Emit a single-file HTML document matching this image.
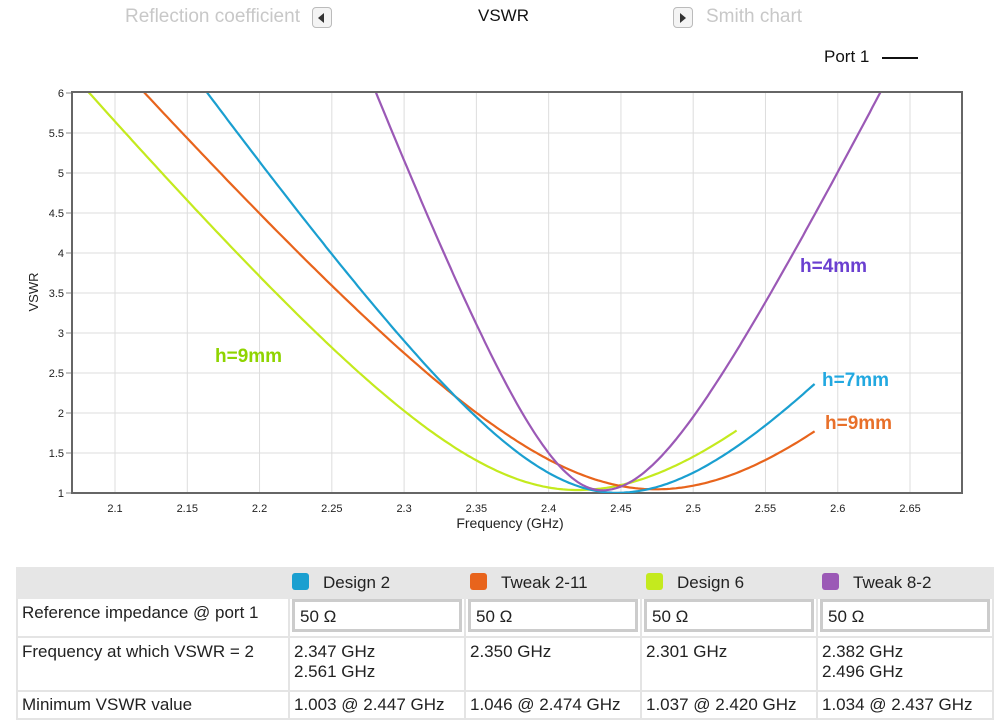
<!DOCTYPE html>
<html><head><meta charset="utf-8"><style>
body{margin:0;width:1000px;height:726px;background:#fff;font-family:"Liberation Sans",Arial,sans-serif;position:relative;overflow:hidden}
.t{position:absolute;white-space:nowrap}
.btn{position:absolute;width:18px;height:19px;border:1px solid #bbb;border-radius:4px;background:#f4f4f4}
table{position:absolute;left:16px;top:567px;border-collapse:collapse;font-size:17px;color:#222;table-layout:fixed;width:976px}
td{border:2px solid #e4e4e4;padding:0 4px;vertical-align:top;overflow:hidden;white-space:nowrap}
.sw{display:inline-block;width:17px;height:17px;border-radius:3px;vertical-align:-2px;margin-right:14px}
.inp{border:3px solid #ccc;height:27px;line-height:30px;padding-left:5px;margin:0 -2px}
</style></head><body>
<div class="t" style="left:125px;top:6px;font-size:19px;color:#c8c8c8">Reflection coefficient</div>
<div class="btn" style="left:312px;top:7px"><div style="position:absolute;left:5px;top:5px;border-right:6px solid #333;border-top:5px solid transparent;border-bottom:5px solid transparent"></div></div>
<div class="t" style="left:478px;top:6px;font-size:17px;color:#111">VSWR</div>
<div class="btn" style="left:673px;top:7px"><div style="position:absolute;left:6px;top:5px;border-left:6px solid #333;border-top:5px solid transparent;border-bottom:5px solid transparent"></div></div>
<div class="t" style="left:706px;top:6px;font-size:19px;color:#c8c8c8">Smith chart</div>
<div class="t" style="left:824px;top:47px;font-size:17px;color:#111">Port 1</div>
<div style="position:absolute;left:882px;top:57px;width:36px;height:2px;background:#111"></div>
<svg id="s" width="1000" height="560" style="position:absolute;left:0;top:0" font-family="Liberation Sans, Arial, sans-serif">
<defs><clipPath id="c"><rect x="72" y="93" width="890" height="400"/></clipPath></defs>
<g id="grid"></g>
<rect x="72" y="92" width="890" height="401" fill="none" stroke="#666" stroke-width="2"/>
<g id="curves" clip-path="url(#c)" fill="none" stroke-width="2.2"></g>
<text x="510" y="528" font-size="14" text-anchor="middle" fill="#222">Frequency (GHz)</text>
<text transform="translate(38,292) rotate(-90)" font-size="13" text-anchor="middle" fill="#222">VSWR</text>
<g font-weight="bold" font-size="19">
<text x="800" y="272" fill="#6a3fd0">h=4mm</text>
<text x="822" y="386" fill="#22a8e0">h=7mm</text>
<text x="825" y="429" fill="#e8702a">h=9mm</text>
<text x="215" y="362" fill="#8fd400">h=9mm</text>
</g>
</svg>
<table>
<colgroup><col style="width:272px"><col style="width:176px"><col style="width:176px"><col style="width:176px"><col style="width:176px"></colgroup>
<tr style="background:#e6e6e6;height:30px"><td style="border-color:#e6e6e6"></td>
<td style="padding-top:4px;border-color:#e6e6e6"><span class="sw" style="background:#1a9fd0;margin-left:-2px"></span>Design 2</td>
<td style="padding-top:4px;border-color:#e6e6e6"><span class="sw" style="background:#e8641c"></span>Tweak 2-11</td>
<td style="padding-top:4px;border-color:#e6e6e6"><span class="sw" style="background:#c4ea1e"></span>Design 6</td>
<td style="padding-top:4px;border-color:#e6e6e6"><span class="sw" style="background:#9b59b6"></span>Tweak 8-2</td></tr>
<tr style="height:39px"><td style="padding-top:4px">Reference impedance @ port 1</td><td><div class="inp">50 Ω</div></td><td><div class="inp">50 Ω</div></td><td><div class="inp">50 Ω</div></td><td><div class="inp">50 Ω</div></td></tr>
<tr style="height:54px"><td style="padding-top:4px">Frequency at which VSWR = 2</td><td style="padding-top:4px">2.347 GHz<br>2.561 GHz</td><td style="padding-top:4px">2.350 GHz</td><td style="padding-top:4px">2.301 GHz</td><td style="padding-top:4px">2.382 GHz<br>2.496 GHz</td></tr>
<tr style="height:28px"><td style="padding-top:3px">Minimum VSWR value</td><td style="padding-top:3px">1.003 @ 2.447 GHz</td><td style="padding-top:3px">1.046 @ 2.474 GHz</td><td style="padding-top:3px">1.037 @ 2.420 GHz</td><td style="padding-top:3px">1.034 @ 2.437 GHz</td></tr>
</table>
<script>
var NS="http://www.w3.org/2000/svg";
function X(f){return 115+(f-2.1)*1445.5}
function Y(v){return 493-(v-1)*80}
var g=document.getElementById('grid'),s=document.getElementById('s');
function el(p,tag,a,txt){var e=document.createElementNS(NS,tag);for(var k in a)e.setAttribute(k,a[k]);if(txt)e.textContent=txt;p.appendChild(e);return e}
for(var i=0;i<12;i++){var f=2.1+i*0.05,x=X(f);el(g,'line',{x1:x,x2:x,y1:93,y2:493,stroke:'#ddd'});el(s,'text',{x:x,y:512,'font-size':11,'text-anchor':'middle',fill:'#222'},(Math.round(f*100)/100).toString());}
for(var v=1;v<=6;v+=0.5){var y=Y(v);if(v>1&&v<6)el(g,'line',{x1:72,x2:962,y1:y,y2:y,stroke:'#ddd'});el(s,'text',{x:64,y:y+4,'font-size':11,'text-anchor':'end',fill:'#222'},v.toString());el(s,'line',{x1:66,x2:71,y1:y,y2:y,stroke:'#888'});}
var cv=document.getElementById('curves');
function curve(col,m,f0,d,kL,kR,fa,fb){var p='';for(var f=fa;f<=fb+1e-9;f+=0.002){var D=f-f0,k=D<0?kL:kR;var v=m+k*(Math.sqrt(d*d+D*D)-d);p+=(p?'L':'M')+X(f).toFixed(1)+','+Y(v).toFixed(1);}el(cv,'path',{d:p,stroke:col})}
curve('#c4ea1e',1.037,2.42,0.135,21.7,19,2.07,2.53);
curve('#e8641c',1.046,2.474,0.145,20.9,19.6,2.10,2.585);
curve('#1a9fd0',1.003,2.447,0.11,25.8,20.7,2.14,2.585);
curve('#9b59b6',1.034,2.437,0.065,47.6,36,2.26,2.66);
</script>
</body></html>
